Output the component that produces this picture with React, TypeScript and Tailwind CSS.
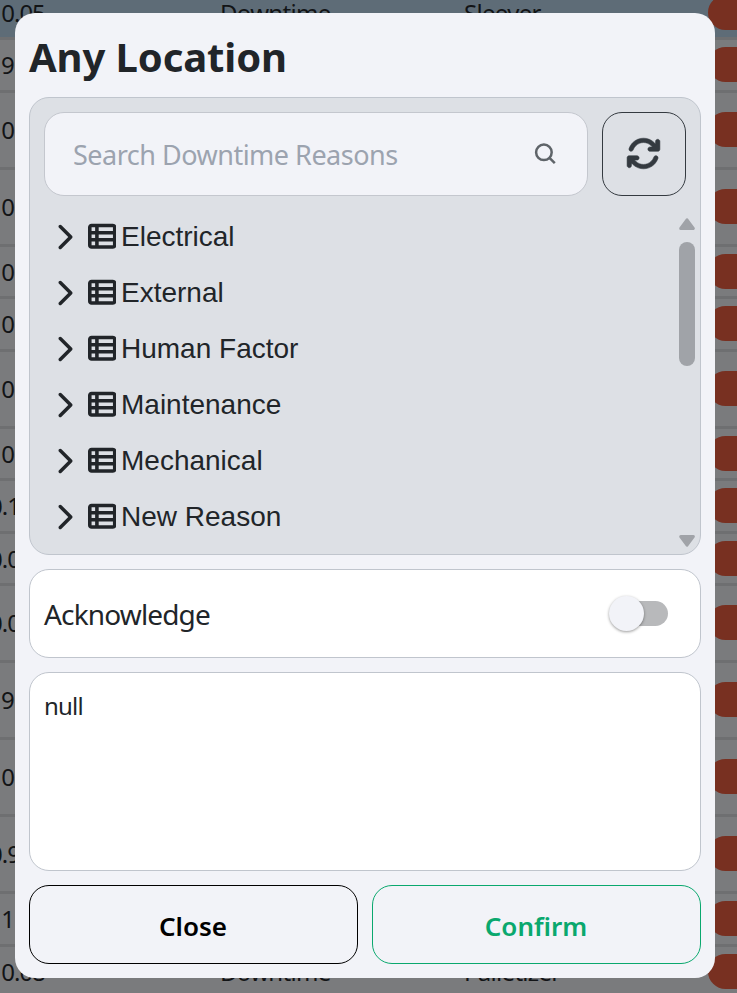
import { FaArrowsRotate, FaChevronRight, FaTableList } from "react-icons/fa6";

type Row = { height: string; value: string; kind?: string; machine?: string; active?: boolean };

const rows: Row[] = [
  { height: "h-[52px] -mt-[12px]", value: "10.05", kind: "Downtime", machine: "Sleever", active: true },
  { height: "h-[53px]", value: "9.05" },
  { height: "h-[77px]", value: "10.05" },
  { height: "h-[77px]", value: "10.05" },
  { height: "h-[52px]", value: "10.05" },
  { height: "h-[53px]", value: "10.05" },
  { height: "h-[77px]", value: "10.05" },
  { height: "h-[52px]", value: "10.05" },
  { height: "h-[53px]", value: "0.15" },
  { height: "h-[52px]", value: "0.05" },
  { height: "h-[77px]", value: "0.05" },
  { height: "h-[77px]", value: "9.05" },
  { height: "h-[77px]", value: "10.05" },
  { height: "h-[77px]", value: "0.95" },
  { height: "h-[53px]", value: "11.05" },
  { height: "h-[53px]", value: "10.08", kind: "Downtime", machine: "Palletizer" },
];

const reasons = ["Electrical", "External", "Human Factor", "Maintenance", "Mechanical", "New Reason"];

function valueIndent(value: string) {
  if (value.startsWith("1")) return "-indent-[11.5px]";
  return value.startsWith("9") ? "indent-[1px]" : "-indent-[11px]";
}

function TableRow({ row }: { row: Row }) {
  return (
    <div
      className={`flex w-[860px] shrink-0 items-center border-b-[3px] border-[#6e6f71] text-[24px] tracking-[-0.7px] text-[#121416] ${row.height} ${row.active ? "bg-[#5e6c77]" : "bg-[#7a7b7d]"}`}
    >
      <div className={`w-[220px] shrink-0 tracking-[-1px] ${valueIndent(row.value)}`}>{row.value}</div>
      <div className="w-[244px] shrink-0">{row.kind}</div>
      <div className="w-[244px] shrink-0">{row.machine}</div>
      <div className="mb-px h-[35px] w-[120px] shrink-0 rounded-full bg-[#783021]" />
    </div>
  );
}

function SearchIcon() {
  return (
    <svg className="size-6" viewBox="0 0 24 24" fill="none" stroke="#5f6469" strokeWidth="2.5">
      <circle cx="9.9" cy="10.3" r="7.8" />
      <path d="M15.2 15.6L20.8 21.2" />
    </svg>
  );
}

function Reason({ label }: { label: string }) {
  return (
    <div className="flex h-14 items-center">
      <FaChevronRight className="mb-px h-7 w-[17.5px] text-[#212529]" />
      <FaTableList className="mb-px ml-[15px] size-[28.5px] text-[#212529]" />
      <span className="ml-[5px] font-['Liberation_Sans',Arial,sans-serif] text-[28px] leading-none text-[#212529]">{label}</span>
    </div>
  );
}

export default function App() {
  return (
    <div className="relative h-[993px] w-[737px] overflow-hidden bg-[#7a7b7d] font-['Noto_Sans','Open_Sans',sans-serif]">
      <div className="flex flex-col">
        {rows.map((row, i) => (
          <TableRow key={i} row={row} />
        ))}
      </div>

      <div className="absolute inset-x-[15px] top-[13px] flex h-[965px] w-[700px] flex-col rounded-[20px] bg-[#f2f3f8] px-[14px] pb-[14px] text-[#212529]">
        <h1 className="flex h-[84px] shrink-0 items-center pt-[3px] text-[40px] leading-none font-bold tracking-[-0.1px]">
          Any Location
        </h1>

        <section className="flex h-[458px] shrink-0 flex-col rounded-[20px] border border-[#c0c5cd] bg-[#dde0e5] px-[14px] pt-[14px]">
          <div className="flex h-[84px] shrink-0 gap-[14px]">
            <div className="flex w-[544px] items-center justify-between rounded-[20px] border border-[#c4c7ce] bg-[#f2f3f8] pr-[29px] pl-[28px]">
              <span className="pt-[3px] text-[27px] tracking-[-0.5px] text-[#9ca3af]">Search Downtime Reasons</span>
              <SearchIcon />
            </div>
            <button className="flex w-[84px] items-center justify-center rounded-[20px] border border-[#343a40] pr-px pb-px">
              <FaArrowsRotate className="size-[35px] stroke-[#343a40] stroke-[8] text-[#343a40]" />
            </button>
          </div>
          <div className="flex min-h-0 flex-1 justify-between pt-[13px]">
            <div className="pl-[11px]">
              {reasons.map((label) => (
                <Reason key={label} label={label} />
              ))}
            </div>
            <div className="-mr-[9px] flex w-4 flex-col items-center pt-[9px] pb-[7px]">
              <svg className="h-3 w-4" viewBox="0 0 16 12" fill="#a0a3a8" stroke="#a0a3a8" strokeWidth="3" strokeLinejoin="round">
                <path d="M8 1.8L14.3 10.5H1.7z" />
              </svg>
              <div className="mt-3 h-[124px] w-4 rounded-full bg-[#a0a3a8]" />
              <svg className="mt-auto h-3 w-4" viewBox="0 0 16 12" fill="#a0a3a8" stroke="#a0a3a8" strokeWidth="3" strokeLinejoin="round">
                <path d="M8 10.2L14.3 1.5H1.7z" />
              </svg>
            </div>
          </div>
        </section>

        <section className="mt-[14px] flex h-[89px] shrink-0 items-center justify-between rounded-[20px] border border-[#c0c5cd] bg-white pr-8 pl-[14px]">
          <span className="pt-px text-[28px] tracking-[-0.85px]">Acknowledge</span>
          <div className="flex h-[25px] w-[59px] items-center rounded-full bg-[linear-gradient(to_right,transparent_20px,#b8b9bb_20px)]">
            <div className="size-[35px] rounded-full bg-[#f2f3f8] shadow-[0_1px_3px_rgba(0,0,0,0.4)]" />
          </div>
        </section>

        <section className="mt-[14px] h-[199px] shrink-0 rounded-[20px] border border-[#c0c5cd] bg-white px-[14px] pt-[15px] text-[24px] tracking-[-0.8px]">
          null
        </section>

        <div className="mt-[14px] grid h-[79px] shrink-0 grid-cols-2 gap-[14px] text-[26px] font-semibold">
          <button className="rounded-[20px] border border-black pt-[3px] pr-px text-black">Close</button>
          <button className="rounded-[20px] border border-[#0aa86e] pt-[3px] pr-px text-[#0aa86e]">Confirm</button>
        </div>
      </div>
    </div>
  );
}
